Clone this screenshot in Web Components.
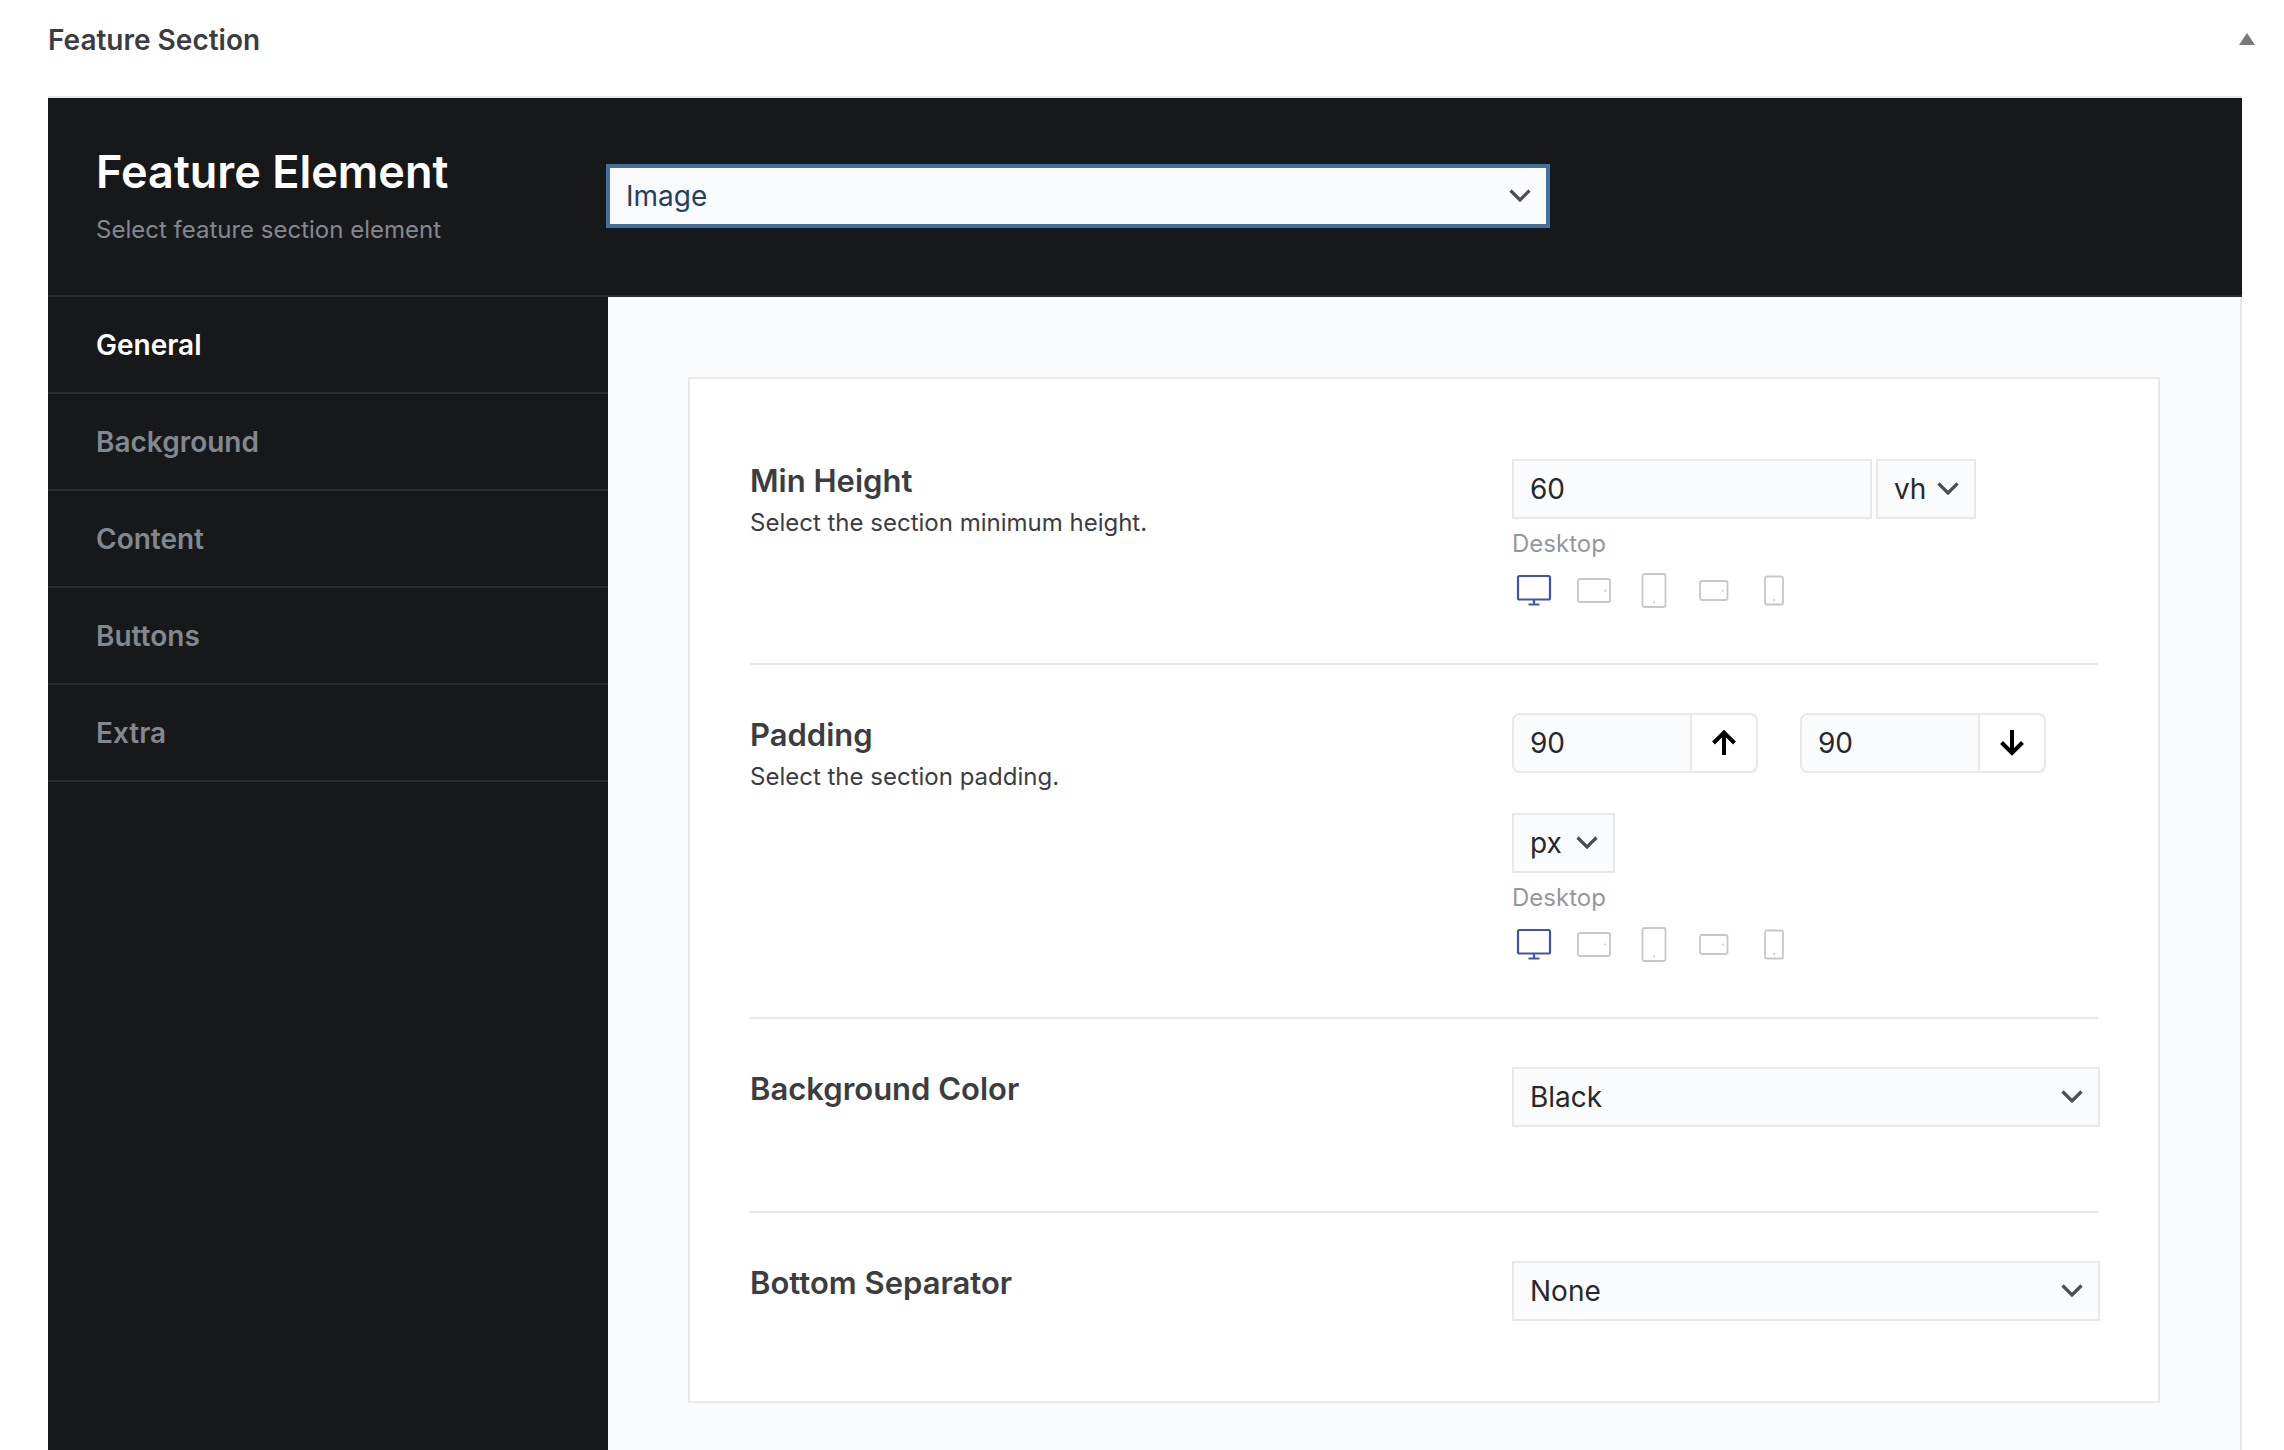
<!DOCTYPE html>
<html lang="en">
<head>
<meta charset="utf-8">
<title>Feature Section</title>
<style>
  html, body { margin: 0; }
  body {
    font-family: Inter, "Liberation Sans", sans-serif;
    font-size: 28px;
    color: #3c3d41;
    background: #fff;
    --ink: #17181a;
    --ink-line: #2c2d30;
    --line: #e6e8ea;
    --surface: #fafbfd;
    --muted: #82888e;
    --side: 560px;
  }
</style>
</head>
<body>
<feature-page>
  <element-header slot="header"></element-header>
  <side-nav slot="nav"></side-nav>
  <settings-card>
    <min-height-row></min-height-row>
    <padding-row></padding-row>
    <select-row class="spacious" name="Background Color" value="Black" options="Black,White,Gray"></select-row>
    <select-row class="last" name="Bottom Separator" value="None" options="None,Wave,Slant"></select-row>
  </settings-card>
</feature-page>

<script>
const fieldStyles = `
  * { box-sizing: border-box; }
  select, input {
    font: inherit; line-height: 32px; color: #26282c; background: var(--surface);
    border: 2px solid var(--line); border-radius: 0; height: 60px; margin: 0;
    padding: 0 16px; width: 100%; min-width: 0; outline: 0; appearance: none;
  }
  .select { display: grid; grid-template-columns: minmax(0, 1fr); align-items: center; align-content: start; }
  .select > * { grid-area: 1 / 1; }
  .select svg { justify-self: end; margin-right: 16px; pointer-events: none; }
`;
const chevron = `<svg width="24" height="16" viewBox="0 0 24 16" fill="none" aria-hidden="true"><path d="M2.500 2.500 12 12 21.500 2.500" stroke="#4c4e52" stroke-width="3.200"/></svg>`;

class BaseElement extends HTMLElement {
  connectedCallback() {
    if (this.shadowRoot) return;
    this.attachShadow({ mode: 'open' }).innerHTML = `<style>${this.styles()}</style>${this.markup()}`;
  }
}

customElements.define('feature-page', class extends BaseElement {
  styles() { return `
    :host { display: flex; flex-direction: column; min-height: 100vh; }
    .bar { display: flex; align-items: center; justify-content: space-between; height: 96px; box-sizing: border-box; padding: 0 28px 16px 48px; }
    h2 { margin: 0; font-size: 28px; line-height: 32px; font-weight: 600; }
    button { display: flex; border: 0; padding: 0; background: none; }
    .panel { flex: 1; display: flex; flex-direction: column; margin: 0 42px 0 48px; border-top: 2px solid var(--line); }
    .body { flex: 1; display: grid; grid-template-columns: var(--side) minmax(0, 1fr); }
    main { background: var(--surface); border-right: 2px solid var(--line); padding: 80px 80px 40px; }
  `; }
  markup() { return `
    <div class="bar"><h2>Feature Section</h2>
      <button type="button" aria-label="Toggle panel"><svg width="18" height="14" viewBox="0 0 18 14"><path d="M9 0 17 12H1Z" fill="#77797c"/></svg></button>
    </div>
    <div class="panel"><slot name="header"></slot>
      <div class="body"><slot name="nav"></slot><main><slot></slot></main></div>
    </div>`; }
});

customElements.define('element-header', class extends BaseElement {
  styles() { return fieldStyles + `
    :host { display: grid; grid-template-columns: var(--side) 940px; align-items: center; height: 199px; box-sizing: border-box; padding-bottom: 2px; background: var(--ink); border-bottom: 2px solid var(--ink-line); }
    .text { padding: 0 0 2px 48px; }
    label { display: block; color: #fff; font-size: 45px; line-height: 56px; font-weight: 600; }
    p { margin: 14px 0 0; font-size: 24px; line-height: 32px; color: var(--muted); }
    select { color: #23415f; border-color: #456f9f; box-shadow: 0 0 0 2px #456f9f; }
  `; }
  markup() { return `
    <div class="text"><label for="element">Feature Element</label><p>Select feature section element</p></div>
    <div class="select"><select id="element"><option>Image</option><option>Video</option></select>${chevron}</div>`; }
});

customElements.define('side-nav', class extends BaseElement {
  styles() { return `
    :host { display: block; background: var(--ink); }
    a { display: block; box-sizing: border-box; height: 97px; padding: 32px 48px; line-height: 32px; font-size: 28px; font-weight: 600; color: var(--muted); text-decoration: none; border-bottom: 2px solid var(--ink-line); }
    a[aria-current] { color: #fff; }
  `; }
  markup() {
    return `<nav>${['General', 'Background', 'Content', 'Buttons', 'Extra'].map((name, i) =>
      `<a href="#${name.toLowerCase()}"${i ? '' : ' aria-current="true"'}>${name}</a>`).join('')}</nav>`;
  }
});

customElements.define('settings-card', class extends BaseElement {
  styles() { return `:host { display: block; background: #fff; border: 2px solid var(--line); padding: 32px 60px; }`; }
  markup() { return `<slot></slot>`; }
});

customElements.define('device-switch', class extends BaseElement {
  styles() { return `
    :host { display: block; height: 96px; }
    p { margin: 0; padding-top: 9px; font-size: 24px; line-height: 32px; color: #96979a; }
    div { display: flex; gap: 16px; padding-top: 8px; }
    button { display: flex; justify-content: center; align-items: center; width: 44px; height: 44px; border: 0; padding: 0; background: none; color: #c6c7c8; }
    button[aria-pressed=true] { color: #4354a8; }
  `; }
  markup() {
    const shapes = {
      'Desktop': '<rect x="4" y="6" width="32" height="23.500" rx="1.500"/><path d="M20 30v4M14.500 34.500h11"/>',
      'Tablet landscape': '<rect x="4" y="9" width="32" height="23" rx="2"/><path d="M30.500 20.500h1.500"/>',
      'Tablet': '<rect x="8.500" y="4" width="23" height="33" rx="2"/><path d="M19.500 32.500h1.500"/>',
      'Phone landscape': '<rect x="6" y="11" width="27.500" height="19" rx="2"/><path d="M28 20.500h1.500"/>',
      'Phone': '<rect x="11" y="6.500" width="18" height="28" rx="2"/><path d="M19.500 30h1.500"/>'
    };
    return `<p>Desktop</p><div>${Object.entries(shapes).map(([name, shape], i) =>
      `<button type="button" aria-label="${name}" aria-pressed="${!i}"><svg width="40" height="40" viewBox="0 0 40 40" fill="none" stroke="currentColor" stroke-width="${i ? 1.8 : 2.2}">${shape}</svg></button>`).join('')}</div>`;
  }
});

class SettingRow extends BaseElement {
  rowStyles() { return ''; }
  styles() { return fieldStyles + `
    :host { display: grid; grid-template-columns: minmax(0, 1fr) 588px; width: calc(100% + 2px); padding: 48px 0 50px;
      background: linear-gradient(var(--line), var(--line)) left bottom / calc(100% - 2px) 2px no-repeat; }
    :host(.spacious) { padding-bottom: 86px; }
    :host(.last) { padding-bottom: 48px; background: none; }
    .name { display: block; font-size: 31px; line-height: 40px; font-weight: 600; padding-top: 2px; }
    .note { margin: 6px 0 0; font-size: 24px; line-height: 32px; }
  ` + this.rowStyles(); }
  text(name, id, note) {
    return `<div><label class="name" for="${id}">${name}</label>${note ? `<p class="note">${note}</p>` : ''}</div>`;
  }
}

customElements.define('min-height-row', class extends SettingRow {
  rowStyles() { return `
    .fields { display: grid; grid-template-columns: 360px 100px; gap: 4px; }
  `; }
  markup() { return this.text('Min Height', 'height', 'Select the section minimum height.') + `
    <div><div class="fields"><input id="height" type="text" value="60">
      <div class="select"><select aria-label="Height unit"><option>vh</option><option>px</option></select>${chevron}</div></div>
      <device-switch></device-switch></div>`; }
});

customElements.define('padding-row', class extends SettingRow {
  rowStyles() { return `
    .fields { display: grid; grid-template-columns: 246px 246px; gap: 42px; padding-bottom: 40px; }
    .group { display: grid; grid-template-columns: minmax(0, 1fr) 66px; height: 60px; border: 2px solid var(--line); border-radius: 8px; overflow: hidden; }
    .group input { border: 0; height: 56px; }
    .group span { display: flex; align-items: center; justify-content: center; border-left: 2px solid var(--line); }
    .unit { width: 103px; }
  `; }
  markup() {
    const group = (id, name, arrow) => `<div class="group"><input id="${id}" type="text" value="90" aria-label="${name}"><span>
      <svg width="28" height="28" viewBox="0 0 28 28" fill="none" stroke="#000" stroke-width="4" aria-hidden="true"><path d="${arrow}"/></svg></span></div>`;
    return this.text('Padding', 'top', 'Select the section padding.') + `
    <div><div class="fields">${group('top', 'Padding top', 'M14 26V4M3.500 14 14 3.500 24.500 14')}${group('bottom', 'Padding bottom', 'M14 1V23M3.500 13.500 14 24 24.500 13.500')}</div>
      <div class="select unit"><select aria-label="Padding unit"><option>px</option><option>em</option></select>${chevron}</div>
      <device-switch></device-switch></div>`;
  }
});

customElements.define('select-row', class extends SettingRow {
  markup() {
    const value = this.getAttribute('value');
    const options = this.getAttribute('options').split(',');
    return this.text(this.getAttribute('name'), 'choice') + `
    <div class="select"><select id="choice">${options.map(o => `<option${o === value ? ' selected' : ''}>${o}</option>`).join('')}</select>${chevron}</div>`;
  }
});
</script>
</body>
</html>
